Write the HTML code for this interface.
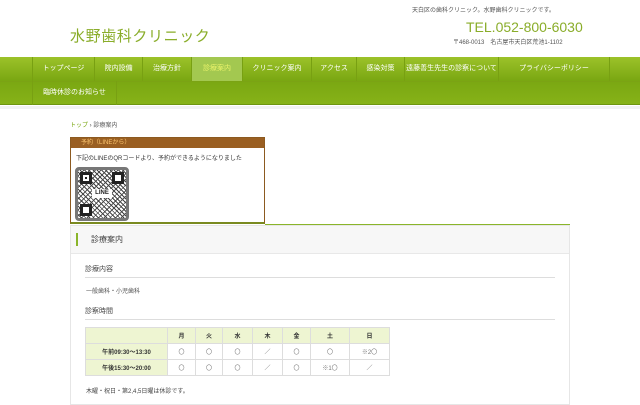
<!DOCTYPE html>
<html lang="ja"><head><meta charset="utf-8">
<style>
*{margin:0;padding:0;box-sizing:border-box}
body{width:640px;height:400px;overflow:hidden;background:#fff;font-family:"Liberation Sans","Noto Sans CJK JP",sans-serif;color:#444;position:relative}
.a{position:absolute}
.nav{left:0;top:57px;width:640px;height:48px;background:linear-gradient(#9cc22a,#7aa712 50%,#86b218);border-bottom:1px solid #6d9510}
.nav .r2{position:absolute;top:24px;left:0;width:640px;height:1px;background:#7ba314}
.ni{position:absolute;height:24px;line-height:24px;font-size:7px;color:#fff;text-align:center;border-right:1px solid #78a012}
.ni.act{background:#a3c850;color:#eaf36a}
th,td{border:1px solid #ddd;font-size:6px;text-align:center;height:16px;font-weight:normal;color:#777}
th{background:#eef5d2;color:#333;font-weight:bold}
</style></head><body>
<div class="a" style="left:412px;top:5px;font-size:6px;color:#555">天白区の歯科クリニック。水野歯科クリニックです。</div>
<div class="a" style="left:70px;top:25px;font-size:15px;color:#8aad2a;letter-spacing:0.6px">水野歯科クリニック</div>
<div class="a" style="left:466px;top:19px;font-size:14px;color:#8aad2a">TEL.052-800-6030</div>
<div class="a" style="left:453px;top:37px;font-size:6px;color:#555">〒468-0013　名古屋市天白区荒池1-1102</div>
<div class="a nav">
<div class="r2"></div>
<div class="ni" style="left:32px;width:63px;border-left:1px solid #78a012">トップページ</div>
<div class="ni" style="left:95px;width:48px">院内設備</div>
<div class="ni" style="left:143px;width:49px">治療方針</div>
<div class="ni act" style="left:192px;width:51px">診療案内</div>
<div class="ni" style="left:243px;width:69px">クリニック案内</div>
<div class="ni" style="left:312px;width:45px">アクセス</div>
<div class="ni" style="left:357px;width:48px">感染対策</div>
<div class="ni" style="left:405px;width:94px">遠藤善生先生の診察について</div>
<div class="ni" style="left:499px;width:111px">プライバシーポリシー</div>
<div class="ni" style="left:32px;top:24px;width:85px;border-left:1px solid #78a012">臨時休診のお知らせ</div>
</div>
<div class="a" style="left:0;top:106px;width:640px;height:3px;background:#f2f2f2"></div>
<div class="a" style="left:70px;top:120px;font-size:6px;color:#555"><span style="color:#7aa712">トップ</span> › 診療案内</div>
<div class="a" style="left:70px;top:137px;width:195px;height:87px;border:1px solid #8c5a20;border-bottom:2px solid #7a8a20;background:#fff">
<div style="height:10px;background:#9a5f22;color:#ffc870;font-size:6px;line-height:10px;padding-left:10px">予約（LINEから）</div>
<div style="font-size:6px;color:#333;margin:5px 0 0 5px">下記のLINEのQRコードより、予約ができるようになりました</div>
<div style="position:absolute;left:4px;top:29px;width:54px;height:54px;border:3px solid #777;border-radius:4px;background:repeating-linear-gradient(45deg,transparent 0 2px,#444 2px 3px),repeating-linear-gradient(-45deg,#fff 0 3px,#555 3px 4px);">
<div style="position:absolute;left:2px;top:2px;width:12px;height:12px;border:3px solid #222;background:#fff"><div style="margin:2px;width:2px;height:2px;background:#222"></div></div>
<div style="position:absolute;right:2px;top:2px;width:12px;height:12px;border:3px solid #222;background:#fff"></div>
<div style="position:absolute;left:2px;bottom:2px;width:12px;height:12px;border:3px solid #222;background:#fff"></div>
<div style="position:absolute;left:14px;top:19px;width:20px;height:9px;background:#fff;font-size:6px;font-weight:bold;color:#222;text-align:center;line-height:9px">LINE</div>
</div>
</div>
<div class="a" style="left:265px;top:224px;width:305px;height:2px;background:#8ab52a"></div>
<div class="a" style="left:70px;top:225px;width:500px;height:180px;border:1px solid #e6e6e6;background:#fff">
<div style="height:28px;background:#f7f7f7;border-bottom:1px solid #e8e8e8;position:relative">
<div style="position:absolute;left:5px;top:7px;width:2px;height:13px;background:#8ab52a"></div>
<div style="position:absolute;left:20px;top:8px;font-size:8px;color:#444">診療案内</div>
</div>
</div>
<div class="a" style="left:85px;top:264px;width:470px;border-bottom:1px solid #ddd;font-size:7px;color:#444;padding-bottom:3px">診療内容</div>
<div class="a" style="left:86px;top:286px;font-size:6px;color:#555">一般歯科・小児歯科</div>
<div class="a" style="left:85px;top:306px;width:470px;border-bottom:1px solid #ddd;font-size:7px;color:#444;padding-bottom:3px">診察時間</div>
<table class="a" style="left:85px;top:327px;width:305px;border-collapse:collapse">
<tr><th style="width:82px"></th><th style="width:28px">月</th><th style="width:27px">火</th><th style="width:30px">水</th><th style="width:30px">木</th><th style="width:28px">金</th><th style="width:39px">土</th><th>日</th></tr>
<tr><th>午前09:30～13:30</th><td>〇</td><td>〇</td><td>〇</td><td>／</td><td>〇</td><td>〇</td><td>※2〇</td></tr>
<tr><th>午後15:30～20:00</th><td>〇</td><td>〇</td><td>〇</td><td>／</td><td>〇</td><td>※1〇</td><td>／</td></tr>
</table>
<div class="a" style="left:86px;top:386px;font-size:6px;color:#444">木曜・祝日・第2,4,5日曜は休診です。</div>
</body></html>
